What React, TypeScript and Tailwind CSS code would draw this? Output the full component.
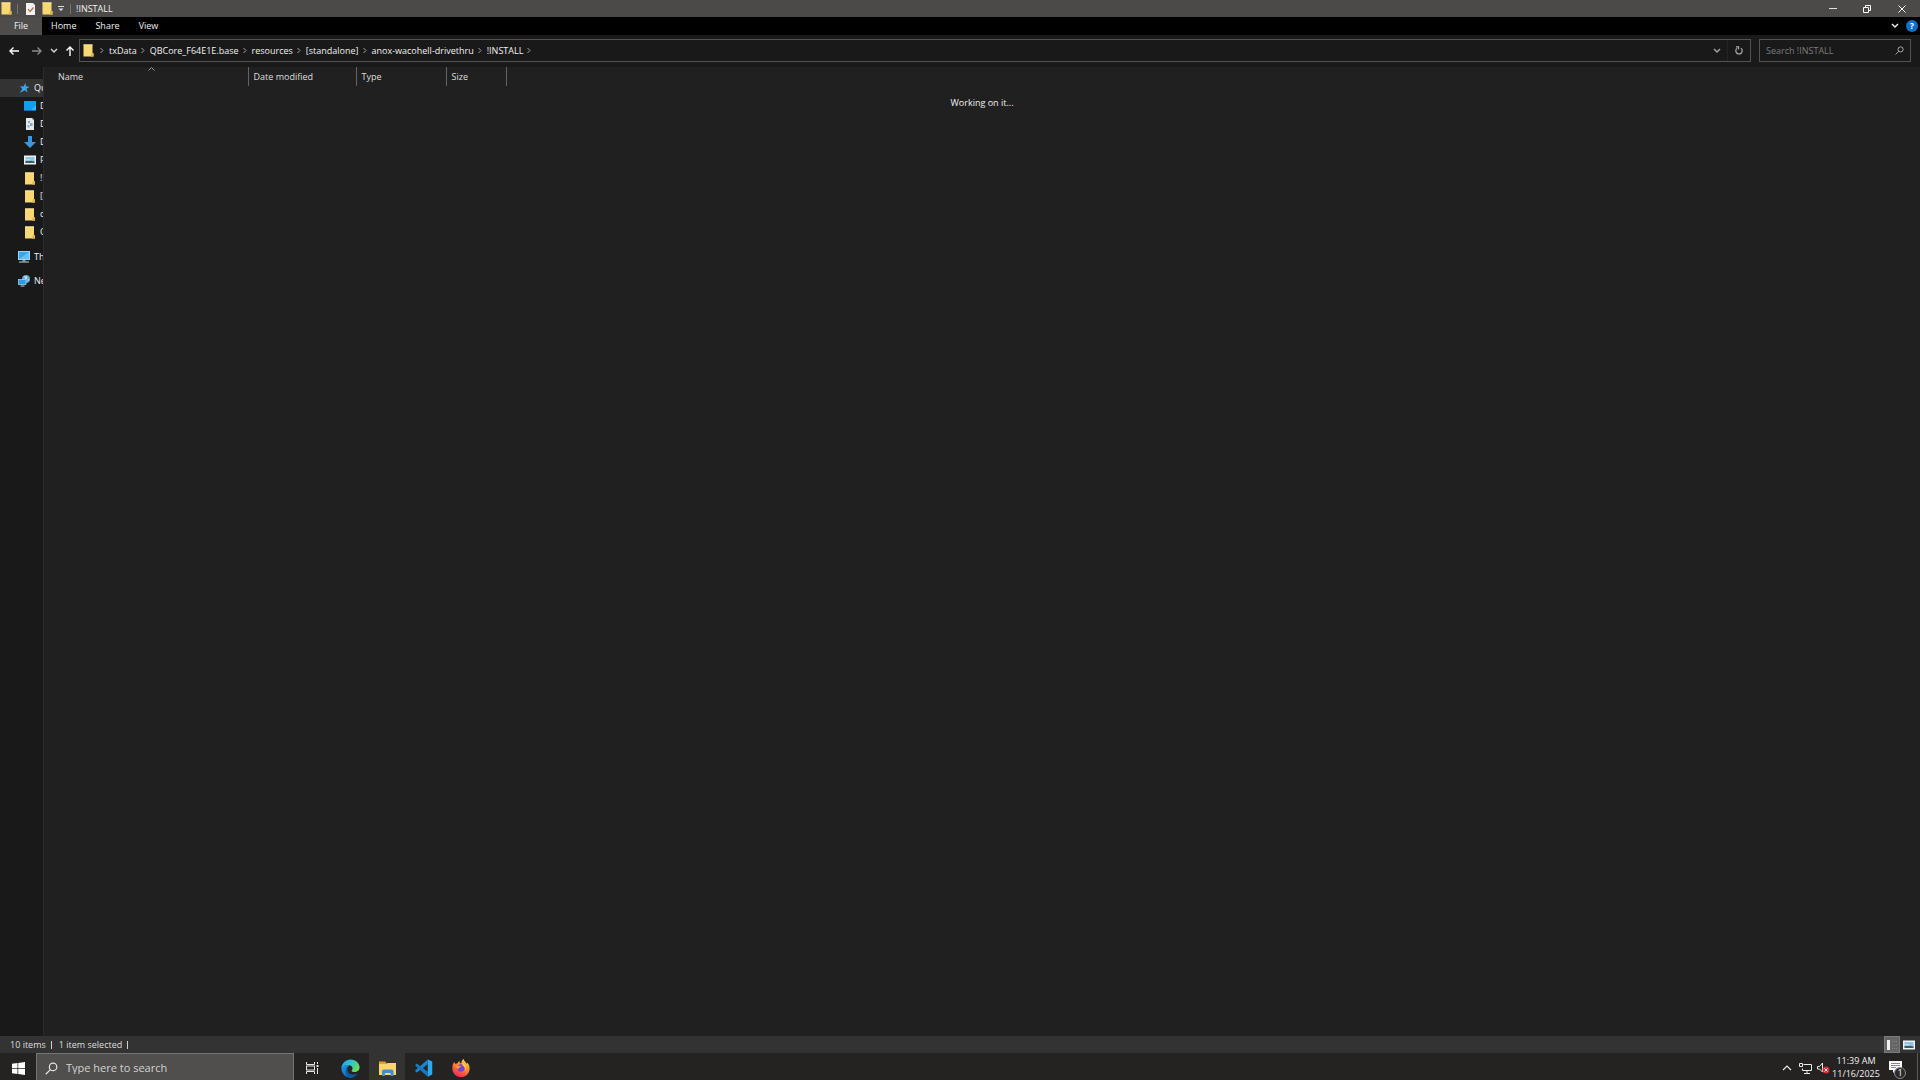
import { useState } from "react";
import type { ReactNode } from "react";

const crumbs = [
  "txData",
  "QBCore_F64E1E.base",
  "resources",
  "[standalone]",
  "anox-wacohell-drivethru",
  "!INSTALL",
];

function Folder({ className = "w-[11px] h-[13px]" }: { className?: string }) {
  return (
    <svg viewBox="0 0 11 13" className={`${className} shrink-0`}>
      <path d="M0.5 0.5h9v8.500l1 0.500v3h-10z" fill="#f8d775" />
      <path d="M0.500 0.500h9v1h-9z" fill="#fbe7a0" />
      <path d="M8.500 9h2v3.500h-3z" fill="#e0b64c" />
    </svg>
  );
}

function Chevron({ className = "w-1 h-[7px]" }: { className?: string }) {
  return (
    <svg viewBox="0 0 4 7" className={`${className} shrink-0`} fill="none" stroke="#a5a5a5">
      <path d="M0.500 1l2.500 2.500l-2.500 2.500" />
    </svg>
  );
}

function ChevronDown({ stroke = "#d0d0d0" }: { stroke?: string }) {
  return (
    <svg viewBox="0 0 8 6" className="w-2 h-[6px] shrink-0" fill="none" stroke={stroke} strokeWidth="1.500">
      <path d="M1 1l3 3l3 -3" />
    </svg>
  );
}

function CheckPage() {
  return (
    <svg viewBox="0 0 9 12" className="w-[9px] h-3 shrink-0">
      <path d="M0 0h7l2 2v10h-9z" fill="#f1f1f1" />
      <path d="M2 6l2 2.500l3.500 -4" fill="none" stroke="#b0703c" strokeWidth="1.200" />
    </svg>
  );
}

function Star() {
  return (
    <svg viewBox="0 0 12 12" className="w-3 h-3 shrink-0">
      <path d="M7.500 1l0.500 3.300l3.500 0.700l-3 1.800l1 3.700l-2.700 -2.200l-5.300 2.700l2.800 -4l-2.300 -2.700l3.500 0.200z" fill="#37a5f0" />
    </svg>
  );
}

function Desktop() {
  return (
    <svg viewBox="0 0 12 12" className="w-3 h-3 shrink-0">
      <rect y="1" width="12" height="10" rx="0.500" fill="#149cf0" />
      <path d="M0 10h12v1h-12z" fill="#0b6fb8" />
      <path d="M7 10l5 -5v5z" fill="#36b4fb" />
    </svg>
  );
}

function DocumentIcon() {
  return (
    <svg viewBox="0 0 12 12" className="w-3 h-3 shrink-0">
      <path d="M2 0h6l2 2v10h-8z" fill="#e6e9ec" />
      <path d="M8 0v2h2z" fill="#a9b2ba" />
      <path d="M4 3h2v2h-2zM6 5h2.500v3h-2.500zM3.500 7h2v2.500h-2z" fill="#7fa9cd" />
    </svg>
  );
}

function DownloadArrow() {
  return (
    <svg viewBox="0 0 12 12" className="w-3 h-3 shrink-0">
      <path d="M4 0h4v6h4l-6 6l-6 -6h4z" fill="#3b96de" />
    </svg>
  );
}

function Picture() {
  return (
    <svg viewBox="0 0 12 12" className="w-3 h-3 shrink-0">
      <rect y="1.500" width="12" height="9" fill="#eef2f5" />
      <rect x="1.500" y="3" width="9" height="6" fill="#8ec4e8" />
      <path d="M1.500 9v-2.500h4l5 1v1.500z" fill="#3a5f63" />
      <path d="M1.500 5.500h5v1h-5z" fill="#e9f6ff" />
    </svg>
  );
}

function Computer() {
  return (
    <svg viewBox="0 0 12 12" className="w-3 h-3 shrink-0">
      <rect x="0.500" y="0.500" width="11" height="8" fill="#38a4ea" stroke="#9fd4f5" />
      <path d="M1 8l10 -7v7z" fill="#63c0f7" />
      <path d="M4.500 9h3v1.500h-3z" fill="#8b9aa5" />
      <path d="M1 10.500h10v1h-10z" fill="#c9d3da" />
    </svg>
  );
}

function Network() {
  return (
    <svg viewBox="0 0 12 12" className="w-3 h-3 shrink-0">
      <circle cx="8" cy="4" r="4" fill="#5fa9d6" />
      <path d="M6 1.500l2.500 -0.500l1 2l-2 1.500zM9 5l2 -1l-0.500 2z" fill="#c5e2f3" />
      <rect x="0.500" y="4.500" width="7.500" height="5" fill="#2d9be6" stroke="#a9daf8" strokeWidth="0.700" />
      <path d="M2.500 11h4" stroke="#c4d0d8" />
    </svg>
  );
}

function WindowsLogo() {
  return (
    <svg viewBox="0 0 13 13" className="w-[13px] h-[13px]" fill="#fff">
      <path d="M0 1.800l5.500 -0.800v5.200h-5.500zM6.200 0.900l6.800 -0.900v6.200h-6.800zM0 6.900h5.500v5.200l-5.500 -0.800zM6.200 6.900h6.800v6.100l-6.800 -0.900z" />
    </svg>
  );
}

function Magnifier({ className, stroke }: { className: string; stroke: string }) {
  return (
    <svg viewBox="0 0 14 14" className={`${className} shrink-0`} fill="none" stroke={stroke} strokeWidth="1.300">
      <circle cx="8.700" cy="5.300" r="4" />
      <path d="M5.800 8.200l-5 5" />
    </svg>
  );
}

function TaskView() {
  return (
    <svg viewBox="0 0 14 12" className="w-[14px] h-3" fill="none" stroke="#e6e6e6">
      <path d="M0.500 0v2.500h8v-2.500M0.500 12v-2.500h8v2.500" />
      <rect x="0.500" y="4" width="8" height="4" />
      <path d="M11.500 0v2M11.500 6v6" />
      <path d="M10.500 4h2" strokeWidth="2" />
    </svg>
  );
}

function EdgeLogo() {
  return (
    <svg viewBox="0 0 24 24" className="w-[19px] h-[19px]">
      <defs>
        <linearGradient id="edgeTop" x1="0" y1="0" x2="1" y2="0.400">
          <stop offset="0" stopColor="#1fa5e6" />
          <stop offset="0.550" stopColor="#2fc3cf" />
          <stop offset="1" stopColor="#6bd95a" />
        </linearGradient>
        <linearGradient id="edgeLeft" x1="0" y1="0" x2="0.600" y2="1">
          <stop offset="0" stopColor="#1899e0" />
          <stop offset="1" stopColor="#1267c4" />
        </linearGradient>
      </defs>
      <path d="M0.500 11.500C1 5 6 0.500 12 0.500c7 0 11.500 5 11.500 10c0 4 -3 6 -6.500 6c-3 0 -4 -1 -3.500 -2c2.500 -3 0.500 -6.500 -4 -6.500c-4 0 -7.500 1.500 -9 3.500z" fill="url(#edgeTop)" />
      <path d="M0.500 11.500c2 -4 8 -4.500 10.500 -3c-4 1 -5 5 -3.500 8.500c1.500 3.500 4.500 5.500 8 6.500c-8 2 -15 -4 -15 -12z" fill="url(#edgeLeft)" />
      <path d="M9 10.500c-2.500 5 1.500 10 8 9c2 -0.300 3.500 -1 4.500 -1.500c-3 5 -9 6.500 -12 5c-4.500 -3 -5 -9.500 -0.500 -12.500z" fill="#0c59a4" />
    </svg>
  );
}

function ExplorerLogo() {
  return (
    <svg viewBox="0 0 17 15" className="w-[17px] h-[15px]">
      <path d="M0 0.500h6l1.500 1.500v3h-7.500z" fill="#e5a32c" />
      <path d="M0 3h7l1.500 -1h8.500v12h-17z" fill="#fbd668" />
      <path d="M3 15v-4.500q0 -2 2 -2h7.500q2 0 2 2v4.500h-3v-3h-5.500v3z" fill="#3f8fd2" />
    </svg>
  );
}

function CodeLogo() {
  return (
    <svg viewBox="0 0 24 24" className="w-[18px] h-[18px]">
      <path d="M17 0.500l6 2.800v17.400l-6 2.800z" fill="#2fa8f0" />
      <path d="M17 0.500v6.500l-14.500 11l-2 -1.500v-1.500z" fill="#1587cf" />
      <path d="M17 23.500v-6.500l-14.500 -11l-2 1.500v1.500z" fill="#1a78c2" />
    </svg>
  );
}

function FirefoxLogo() {
  return (
    <svg viewBox="0 0 24 24" className="w-[18px] h-[18px]">
      <defs>
        <linearGradient id="fox" x1="0.800" y1="0" x2="0.300" y2="1">
          <stop offset="0" stopColor="#ffe14a" />
          <stop offset="0.450" stopColor="#ff8a2a" />
          <stop offset="1" stopColor="#f0245a" />
        </linearGradient>
      </defs>
      <path d="M3 4l1.500 2.500c1 -0.700 2 -1 3 -1c0.500 -1.500 1.500 -2.500 2.500 -3l0.500 3h2c0 -2.500 1 -4.500 3 -5.500c0.500 3 3 4 4.500 6.500l0.500 -2c2 2.500 3 5 3 8c0 6.500 -5 11.500 -11.500 11.500s-11.500 -5 -11.500 -11.500c0 -3.500 0.500 -6 2.500 -8.500z" fill="url(#fox)" />
      <circle cx="12" cy="12" r="5" fill="#7542d8" />
      <path d="M5 9c3 -1 6 0 7.500 1.500c-2 0 -3.500 1 -4 3c-2 -1 -3.500 -2.500 -3.500 -4.500z" fill="#ff9a2e" />
      <path d="M14 5c5 2 6 8 3.500 12c0.500 -4 -0.500 -7 -3.500 -8z" fill="#ffc83a" />
    </svg>
  );
}

type NavItem = { label: string; icon: ReactNode };

const quickItems: NavItem[] = [
  { label: "Desktop", icon: <Desktop /> },
  { label: "Documents", icon: <DocumentIcon /> },
  { label: "Downloads", icon: <DownloadArrow /> },
  { label: "Pictures", icon: <Picture /> },
  { label: "!INSTALL", icon: <Folder className="w-3 h-[13px]" /> },
  { label: "[standalone]", icon: <Folder className="w-3 h-[13px]" /> },
  { label: "cfg", icon: <Folder className="w-3 h-[13px]" /> },
  { label: "QBCore", icon: <Folder className="w-3 h-[13px]" /> },
];

function NavRow({ item, root, active }: { item: NavItem; root?: boolean; active?: boolean }) {
  return (
    <a
      href="#"
      className={`flex items-center h-[18px] gap-1 overflow-hidden whitespace-nowrap ${root ? "pl-[18px]" : "pl-6"} ${
        active ? "bg-[#333333]" : ""
      }`}
    >
      {item.icon}
      <span>{item.label}</span>
    </a>
  );
}

function TitleBar() {
  return (
    <header className="flex items-center h-[17px] shrink-0 bg-[#4c4a48]">
      <Folder className="ml-px w-[11px] h-[13px]" />
      <span className="w-px h-[10px] bg-[#77746f] ml-[5px]" />
      <button aria-label="Properties" className="ml-2">
        <CheckPage />
      </button>
      <button aria-label="New folder" className="ml-[7px]">
        <Folder />
      </button>
      <button aria-label="Customize toolbar" className="ml-[5px]">
        <svg viewBox="0 0 6 6" className="w-[6px] h-[6px]" fill="#e0e0e0">
          <path d="M0 0h6v1h-6zM0.500 2.500h5l-2.500 2.500z" />
        </svg>
      </button>
      <span className="w-px h-[10px] bg-[#77746f] ml-[6px]" />
      <h1 className="ml-[5px]">!INSTALL</h1>
      <div className="ml-auto flex items-center h-full text-white">
        <button aria-label="Minimize" className="w-[34px] h-full flex items-center justify-center">
          <span className="w-2 h-px bg-[#e0e0e0]" />
        </button>
        <button aria-label="Restore" className="w-[34px] h-full flex items-center justify-center">
          <svg viewBox="0 0 8 8" className="w-2 h-2" fill="none" stroke="#fff">
            <path d="M0.500 2.500h5v5h-5zM2.500 2.500v-2h5v5h-2" />
          </svg>
        </button>
        <button aria-label="Close" className="w-9 h-full flex items-center justify-center">
          <svg viewBox="0 0 8 8" className="w-2 h-2" stroke="#fff">
            <path d="M0.500 0.500l7 7M7.500 0.500l-7 7" />
          </svg>
        </button>
      </div>
    </header>
  );
}

function Ribbon() {
  return (
    <nav className="flex items-center h-[18px] shrink-0 bg-black">
      <button className="w-[42px] h-full bg-[#4f4d4b]">File</button>
      <button className="ml-[9px]">Home</button>
      <button className="ml-[19px]">Share</button>
      <button className="ml-[19px]">View</button>
      <button aria-label="Expand the ribbon" className="ml-auto mr-[7px]">
        <ChevronDown stroke="#e8e8e8" />
      </button>
      <button
        aria-label="Help"
        className="w-3 h-3 mr-[2px] rounded-full bg-[#0f6fc9] text-white font-bold leading-3 text-center"
      >
        ?
      </button>
    </nav>
  );
}

function AddressBar() {
  const [query, setQuery] = useState("");

  return (
    <div className="flex items-center h-8 shrink-0 bg-[#191919] pr-[9px] pb-px">
      <button aria-label="Back" className="ml-[9px]">
        <svg viewBox="0 0 10 8" className="w-[10px] h-2" fill="none" stroke="#fff" strokeWidth="1.400">
          <path d="M4.500 0.500l-3.500 3.500l3.500 3.500M1 4h9" />
        </svg>
      </button>
      <button aria-label="Forward" className="ml-[13px]">
        <svg viewBox="0 0 10 8" className="w-[10px] h-2" fill="none" stroke="#8a8a8a" strokeWidth="1.400">
          <path d="M5.500 0.500l3.500 3.500l-3.500 3.500M9 4h-9" />
        </svg>
      </button>
      <button aria-label="Recent locations" className="ml-2">
        <ChevronDown />
      </button>
      <button aria-label="Up" className="ml-2">
        <svg viewBox="0 0 8 10" className="w-2 h-[10px]" fill="none" stroke="#fff" strokeWidth="1.400">
          <path d="M0.500 4.500l3.500 -3.500l3.500 3.500M4 1v9" />
        </svg>
      </button>

      <div className="flex flex-1 items-center h-[23px] ml-[5px] border border-[#535353] pl-[3px]">
        <Folder />
        <span className="w-[6px]" />
        <Chevron />
        {crumbs.map((crumb) => (
          <span key={crumb} className="flex items-center">
            <a href="#" className="ml-[5px] mr-1">
              {crumb}
            </a>
            <Chevron />
          </span>
        ))}
        <button aria-label="Previous locations" className="ml-auto mr-[6px]">
          <ChevronDown stroke="#a0a0a0" />
        </button>
        <button aria-label="Refresh" className="w-[23px] h-full flex items-center justify-center border-l border-[#242424]">
          <svg viewBox="0 0 8 9" className="w-2 h-[9px]" fill="none" stroke="#aaaaaa" strokeWidth="1.200">
            <path d="M2 2.300a3.200 3.200 0 1 0 4 0M1 0.800h2.600v2.700" />
          </svg>
        </button>
      </div>

      <label className="flex items-center w-[152px] h-[23px] ml-2 border border-[#535353] pl-[6px] pr-[6px]">
        <input
          type="text"
          aria-label="Search !INSTALL"
          value={query}
          onChange={(e) => setQuery(e.target.value)}
          placeholder="Search !INSTALL"
          className="flex-1 min-w-0 bg-transparent outline-none placeholder:text-[#7c7c7c]"
        />
        <Magnifier className="w-[9px] h-[9px]" stroke="#c4c4c4" />
      </label>
    </div>
  );
}

function FileList() {
  return (
    <main className="flex-1 bg-[#202020]">
      <table className="table-fixed w-[462px] text-left text-[#dedede]">
        <thead>
          <tr className="h-[19px]">
            <th className="relative w-[204px] pl-[14px] font-normal border-r border-[#636363]">
              Name
              <svg viewBox="0 0 7 4" className="absolute left-[104px] top-0 w-[7px] h-1" fill="none" stroke="#9a9a9a">
                <path d="M0.500 3.500l3 -3l3 3" />
              </svg>
            </th>
            <th className="w-[108px] pl-[5px] font-normal border-r border-[#636363]">Date modified</th>
            <th className="w-[90px] pl-[5px] font-normal border-r border-[#636363]">Type</th>
            <th className="w-[60px] pl-[5px] font-normal border-r border-[#636363]">Size</th>
          </tr>
        </thead>
      </table>
      <p className="mt-[11px] text-center">Working on it...</p>
    </main>
  );
}

function StatusBar() {
  return (
    <footer className="flex items-center h-[17px] shrink-0 bg-[#333333] pl-[10px] text-[#dedede]">
      <span>10 items</span>
      <span className="w-px h-2 bg-[#d0d0d0] ml-[5px] mr-[7px]" />
      <span>1 item selected</span>
      <span className="w-px h-2 bg-[#d0d0d0] ml-[5px]" />
      <button aria-label="Details view" className="ml-auto w-4 h-[17px] flex items-center justify-center bg-[#666666] border border-[#7a7a7a]">
        <svg viewBox="0 0 12 10" className="w-3 h-[10px]">
          <path d="M1 0h3v10h-3z" fill="#f0f0f0" />
          <path d="M6 1.500h5M6 5h5M6 8.500h5" stroke="#85827f" strokeDasharray="1 1" />
        </svg>
      </button>
      <button aria-label="Large icons view" className="w-4 h-[17px] ml-px mr-[3px] flex items-center justify-center">
        <Picture />
      </button>
    </footer>
  );
}

function Taskbar() {
  return (
    <div className="flex h-[27px] shrink-0 bg-[#242322] overflow-hidden">
      <button aria-label="Start" className="w-9 flex items-center justify-center pt-[3px]">
        <WindowsLogo />
      </button>
      <label className="flex items-center w-[258px] pl-2 pt-[2px] gap-2 bg-[#504f4d] border border-b-0 border-[#777573]">
        <Magnifier className="w-[13px] h-[13px]" stroke="#e4e4e4" />
        <input
          type="text"
          aria-label="Type here to search"
          placeholder="Type here to search"
          className="flex-1 min-w-0 bg-transparent outline-none text-[11px] placeholder:text-[#d2d2d2]"
        />
      </label>
      <button aria-label="Task view" className="w-[37px] flex items-center justify-center pt-[3px]">
        <TaskView />
      </button>
      <button aria-label="Microsoft Edge" className="w-[38px] flex items-center justify-center pt-[3px]">
        <EdgeLogo />
      </button>
      <button aria-label="File Explorer" className="w-9 flex items-center justify-center pt-[3px] bg-[#333332]">
        <ExplorerLogo />
      </button>
      <button aria-label="Visual Studio Code" className="w-[38px] flex items-center justify-center pt-[3px]">
        <CodeLogo />
      </button>
      <button aria-label="Firefox" className="w-9 flex items-center justify-center pt-[3px]">
        <FirefoxLogo />
      </button>

      <div className="ml-auto flex items-center">
        <button aria-label="Show hidden icons" className="mt-[3px]">
          <svg viewBox="0 0 10 6" className="w-[10px] h-[6px]" fill="none" stroke="#eaeaea" strokeWidth="1.200">
            <path d="M1 5l4 -4l4 4" />
          </svg>
        </button>
        <button aria-label="Network" className="ml-[7px] mt-[3px]">
          <svg viewBox="0 0 13 11" className="w-[13px] h-[11px]" fill="none" stroke="#eaeaea">
            <path d="M4.500 1.500h8v6h-9v-2M8 8v2M5 10.500h6M0.500 0.500h3v3h-3z" />
          </svg>
        </button>
        <button aria-label="Volume muted" className="ml-[5px] mt-[3px]">
          <svg viewBox="0 0 13 12" className="w-[13px] h-3">
            <path d="M0.500 4.500h2l3 -3.500v9l-3 -3h-2z" fill="none" stroke="#eaeaea" />
            <circle cx="9" cy="8" r="3.500" fill="#d92c35" />
            <path d="M7.500 6.500l3 3M10.500 6.500l-3 3" stroke="#fff" />
          </svg>
        </button>
        <button className="ml-[2px] w-[48px] text-center leading-[13px] whitespace-nowrap pt-px">
          11:39 AM
          <br />
          11/16/2025
        </button>
        <button aria-label="Notifications, 1 new" className="relative w-[19px] h-full ml-2 mr-[10px]">
          <svg viewBox="0 0 13 12" className="absolute left-px top-2 w-[13px] h-3">
            <path d="M0 0h13v9h-6l-3 3v-3h-4z" fill="#fff" />
            <path d="M2 2.500h9M2 4.500h9M2 6.500h5" stroke="#6b6b6b" strokeWidth="0.800" />
          </svg>
          <span className="absolute left-[6px] top-[14px] w-3 h-3 rounded-full bg-[#2c2b2a] border border-[#8b8b8b] leading-[10px] text-center text-white">
            1
          </span>
        </button>
        <span className="w-px h-full bg-[#5c5b5a] mr-[2px]" />
      </div>
    </div>
  );
}

export default function App() {
  return (
    <div className="flex flex-col h-screen overflow-hidden bg-[#191919] text-[#f0f0f0] text-[9px] leading-3 font-['Open_Sans','Noto_Sans',sans-serif]">
      <TitleBar />
      <Ribbon />
      <AddressBar />
      <div className="flex flex-1 min-h-0">
        <aside className="w-11 shrink-0 border-r border-[#2b2b2b] pt-3 overflow-hidden">
          <NavRow root active item={{ label: "Quick access", icon: <Star /> }} />
          {quickItems.map((item) => (
            <NavRow key={item.label} item={item} />
          ))}
          <div className="mt-[7px]">
            <NavRow root item={{ label: "This PC", icon: <Computer /> }} />
          </div>
          <div className="mt-[6px]">
            <NavRow root item={{ label: "Network", icon: <Network /> }} />
          </div>
        </aside>
        <FileList />
      </div>
      <StatusBar />
      <Taskbar />
    </div>
  );
}
